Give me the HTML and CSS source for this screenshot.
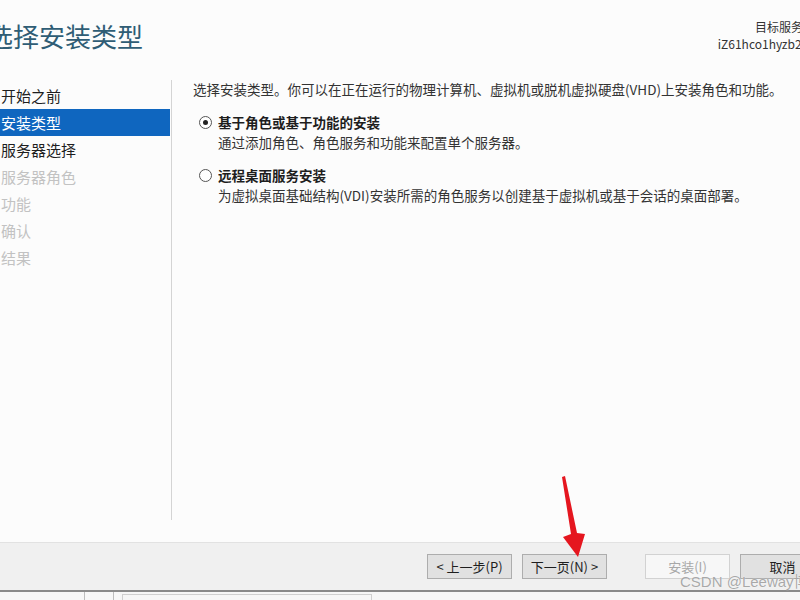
FILE: index.html
```html
<!DOCTYPE html>
<html lang="zh-CN">
<head>
    <meta charset="UTF-8">
    <title>添加角色和功能向导</title>
    <link rel="stylesheet" href="styles.css">
</head>
<body>
    <div class="wizard">
        <div class="header">
            <h1 class="title">选择安装类型</h1>
            <div class="target">
                <div>目标服务器</div>
                <div>iZ61hco1hyzb2vZ</div>
            </div>
        </div>

        <div class="main">
            <ul class="steps">
                <li>开始之前</li>
                <li class="active">安装类型</li>
                <li>服务器选择</li>
                <li class="disabled">服务器角色</li>
                <li class="disabled">功能</li>
                <li class="disabled">确认</li>
                <li class="disabled">结果</li>
            </ul>

            <div class="content">
                <p class="intro">选择安装类型。你可以在正在运行的物理计算机、虚拟机或脱机虚拟硬盘(VHD)上安装角色和功能。</p>

                <div class="option">
                    <span class="radio checked"></span>
                    <div>
                        <div class="option-label">基于角色或基于功能的安装</div>
                        <div class="option-desc">通过添加角色、角色服务和功能来配置单个服务器。</div>
                    </div>
                </div>

                <div class="option">
                    <span class="radio"></span>
                    <div>
                        <div class="option-label">远程桌面服务安装</div>
                        <div class="option-desc">为虚拟桌面基础结构(VDI)安装所需的角色服务以创建基于虚拟机或基于会话的桌面部署。</div>
                    </div>
                </div>
            </div>
        </div>

        <div class="footer">
            <div class="button-group">
                <button class="btn">&lt; 上一步(P)</button>
                <button class="btn">下一页(N) &gt;</button>
            </div>
            <div class="button-group">
                <button class="btn" disabled>安装(I)</button>
                <button class="btn">取消</button>
            </div>
        </div>

        <div class="taskbar">
            <span class="tb-slot"></span>
            <span class="tb-slot narrow"></span>
            <span class="tb-box"></span>
        </div>
    </div>

    <!-- annotation arrow pointing at the next button -->
    <svg class="arrow" width="800" height="600" viewBox="0 0 800 600">
        <polygon points="562,477 565,476 577,533 585,534 578,557 563,537 571,534" fill="#e5161f"/>
    </svg>

    <div class="watermark">CSDN @Leeway博</div>
</body>
</html>
```

FILE: styles.css
```css
body {
    margin: 0;
    width: 800px;
    height: 600px;
    overflow: hidden;
    background-color: #fcfcfc;
    font-family: "Noto Sans CJK SC", "Noto Sans", sans-serif;
    color: #1e1e1e;
    position: relative;
}
.wizard {
    display: flex;
    flex-direction: column;
    height: 600px;
}
.header {
    height: 80px;
    flex-shrink: 0;
    display: flex;
    justify-content: space-between;
    align-items: flex-start;
}
.title {
    margin: 16px 0 0 -13px;
    font-size: 26px;
    font-weight: normal;
    line-height: 40px;
    color: #2f5d75;
}
.target {
    margin: 18px -15px 0 0;
    font-size: 12px;
    line-height: 17px;
    text-align: right;
    white-space: nowrap;
    color: #333;
}
.main {
    height: 462px;
    flex-shrink: 0;
    box-sizing: border-box;
    display: flex;
    padding-bottom: 22px;
}
.steps {
    list-style: none;
    margin: 0;
    padding: 2px 0 0 0;
    width: 171px;
    border-right: 1px solid #d4d4d4;
}
.steps li {
    height: 27px;
    line-height: 27px;
    font-size: 15px;
    padding-left: 1px;
    margin-right: 1px;
    color: #1e1e1e;
}
.steps li.active {
    background-color: #0f66bf;
    color: white;
}
.steps li.disabled {
    color: #c2c2c2;
}
.content {
    flex: 1;
    padding: 0 0 0 21px;
}
.intro {
    margin: 0;
    font-size: 13.5px;
    line-height: 18px;
    white-space: nowrap;
    color: #333;
}
.option {
    display: flex;
    gap: 6px;
    margin-top: 14px;
    margin-left: 6px;
}
.option + .option {
    margin-top: 12px;
}
.radio {
    width: 11px;
    height: 11px;
    border: 1px solid #555;
    border-radius: 50%;
    margin-top: 4px;
    position: relative;
    background: #fff;
    flex-shrink: 0;
}
.radio.checked::after {
    content: "";
    position: absolute;
    left: 3px;
    top: 3px;
    width: 5px;
    height: 5px;
    border-radius: 50%;
    background: #222;
}
.option-label {
    font-size: 13.5px;
    font-weight: bold;
    line-height: 20px;
    color: #1e1e1e;
}
.option-desc {
    font-size: 13.5px;
    line-height: 21px;
    color: #333;
}
.footer {
    height: 48px;
    flex-shrink: 0;
    background-color: #f0f0f0;
    border-top: 1px solid #e2e2e2;
    display: flex;
    align-items: center;
    padding-left: 427px;
    gap: 38px;
    box-sizing: border-box;
}
.button-group {
    display: flex;
    gap: 10px;
}
.btn {
    width: 85px;
    height: 25px;
    padding: 0;
    border: 1px solid #adadad;
    background-color: #e1e1e1;
    font-family: inherit;
    font-size: 13px;
    color: #1e1e1e;
}
.btn:disabled {
    background-color: #f7f7f7;
    border-color: #d2d2d2;
    color: #a8a8a8;
}
.taskbar {
    flex: 1;
    border-top: 2px solid #8a8a8a;
    background-color: #f7f7f7;
    display: flex;
}
.tb-slot {
    width: 84px;
    border-right: 1px solid #bdbdbd;
}
.tb-slot.narrow {
    width: 28px;
}
.tb-box {
    margin: 2px 0 0 8px;
    width: 248px;
    border: 1px solid #d0d0d0;
    border-bottom: none;
}
.arrow {
    position: absolute;
    left: 0;
    top: 0;
    pointer-events: none;
}
.watermark {
    position: absolute;
    left: 680px;
    top: 570px;
    font-family: "Liberation Sans", "Noto Sans CJK SC", sans-serif;
    font-size: 15px;
    white-space: nowrap;
    color: rgba(140, 140, 140, 0.75);
    text-shadow: 0 0 1px #fff;
}
```
